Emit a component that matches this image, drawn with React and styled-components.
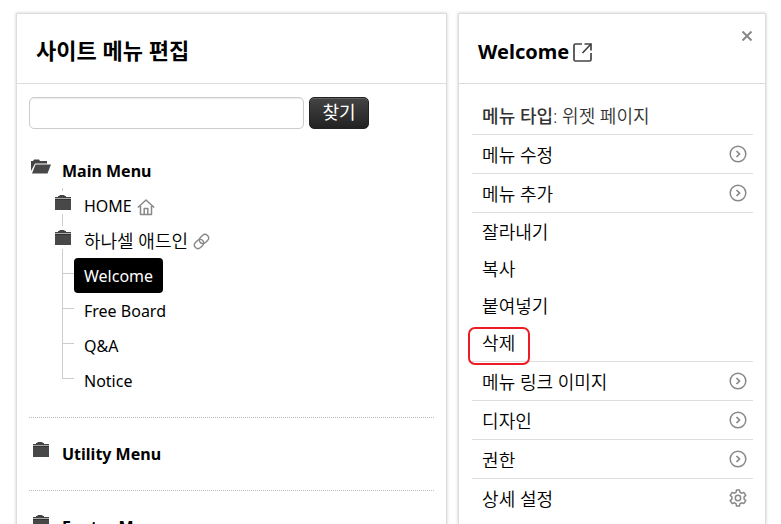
import styled, { createGlobalStyle } from "styled-components"

const GlobalStyle = createGlobalStyle`
    * {
        box-sizing: border-box;
    }

    body {
        margin: 0;
        background-color: #fff;
        color: #000;
        font-family: "Noto Sans", "Noto Sans CJK KR", sans-serif;
        font-size: 16px;
    }

    h2, h3, p, ul {
        margin: 0;
        padding: 0;
    }

    ul {
        list-style: none;
    }
`

const Page = styled.main`
    display: grid;
    grid-template-columns: minmax(0, 7fr) minmax(0, 5fr);
    gap: 11px;
    min-height: 100vh;
    padding: 13px 15px 0 16px;
`

const Panel = styled.section`
    border: 1px solid #ddd;
    border-bottom: 0;
    box-shadow: 0 0 3px #ccc;
    background-color: #fff;
`

const PanelHeader = styled.header`
    display: flex;
    align-items: flex-start;
    justify-content: space-between;
    border-bottom: 1px solid #ddd;
`

const Title = styled.h2`
    display: flex;
    align-items: center;
    gap: 3px;
    padding: ${({ $korean }) => ($korean ? "22px 19px 19px" : "24px 19px 17px")};
    font-size: ${({ $korean }) => ($korean ? "22px" : "20px")};
    line-height: 28px;
    white-space: nowrap;
`

const CloseButton = styled.button`
    display: flex;
    align-items: center;
    justify-content: center;
    width: 20px;
    height: 20px;
    margin: 12px 8px 0 0;
    padding: 0;
    border: 0;
    background: none;
    color: #888;
    cursor: pointer;
`

const TreeBody = styled.div`
    padding: 13px 12px 0;
`

const SearchForm = styled.form`
    display: flex;
    gap: 5px;
    padding-bottom: 6px;
`

const SearchInput = styled.input`
    flex: 0 1 275px;
    min-width: 0;
    height: 32px;
    padding: 0 8px;
    border: 1px solid #ccc;
    border-radius: 5px;
    box-shadow: inset 0 1px 1px rgba(0, 0, 0, 0.08);
    font: inherit;
`

const SearchButton = styled.button`
    width: 60px;
    height: 32px;
    padding: 0 0 2px;
    border: 1px solid #222;
    border-radius: 5px;
    background: linear-gradient(#444, #222);
    box-shadow: inset 0 1px 0 rgba(255, 255, 255, 0.15);
    color: #fff;
    font-family: inherit;
    font-size: 18px;
    line-height: 28px;
    cursor: pointer;
`

const MenuGroup = styled.section`
    padding: 18px 0 19px;
    border-bottom: 1px dotted #bbb;
`

const GroupTitle = styled.h3`
    display: grid;
    grid-template-columns: 20px 1fr;
    gap: 11px;
    height: 35px;
    padding-left: 2px;
    font-size: 16px;
    line-height: 36px;

    svg {
        margin-top: 6px;
        justify-self: center;
    }
`

const TreeRow = styled.li`
    display: flex;
    height: 35px;
    padding-left: 26px;
`

const FolderGutter = styled.span`
    display: flex;
    flex-direction: column;
    width: 19px;

    &::before,
    &::after {
        content: "";
        width: 1px;
        margin-left: 7px;
        background-color: #ccc;
    }

    &::before {
        height: 3px;
    }

    &::after {
        flex: 1;
    }

    svg {
        margin: 4px 0;
    }
`

const Branch = styled.span`
    width: 19px;
    padding-left: 7px;
    display: flex;
    flex-direction: column;

    &::before {
        content: "";
        height: 15px;
        border: solid #ccc;
        border-width: 0 0 1px 1px;
    }

    &::after {
        content: "";
        flex: 1;
        border-left: 1px solid ${({ $last }) => ($last ? "transparent" : "#ccc")};
    }
`

const TreeLink = styled.a`
    display: flex;
    align-items: center;
    gap: 5px;
    padding: 2px 10px 0;
    border-radius: 4px;
    background-color: ${({ $active }) => ($active ? "#000" : "transparent")};
    color: ${({ $active }) => ($active ? "#fff" : "#000")};
    font-size: ${({ $korean }) => ($korean ? "18px" : "16px")};
    font-weight: ${({ $korean }) => ($korean ? 350 : 400)};
    line-height: 33px;
    text-decoration: none;
    white-space: nowrap;

    svg {
        color: #888;
    }
`

const OptionBody = styled.div`
    padding: 13px 12px 0 13px;
`

const MenuType = styled.p`
    height: 37px;
    padding-left: 10px;
    color: #333;
    font-size: 18px;
    font-weight: 350;
    line-height: 38px;
    white-space: nowrap;

    b {
        font-weight: 500;
    }
`

const OptionItem = styled.li`
    position: relative;
    border-top: ${({ $line }) => ($line ? "1px solid #ddd" : "0")};
`

const OptionLink = styled.a`
    display: flex;
    align-items: center;
    justify-content: space-between;
    height: ${({ $tall }) => ($tall ? "38px" : "37px")};
    padding: 0 6px 1px 10px;
    color: #000;
    font-size: 18px;
    font-weight: 350;
    text-decoration: none;
    white-space: nowrap;

    svg {
        color: #888;
    }
`

const Highlight = styled.span`
    position: absolute;
    top: 3px;
    left: -4px;
    width: 62px;
    height: 38px;
    border: 2px solid #ed1c24;
    border-radius: 7px;
    pointer-events: none;
    z-index: 1;
`

function FolderIcon() {
    return (
        <svg width="16" height="15" viewBox="0 0 16 15" aria-hidden="true">
            <path d="M3 1h1l1-1h4l1 1h1v1H3z" fill="#444" />
            <path d="M0 2h16v1H0z" fill="#444" />
            <path d="M0 3h16v1H0z" fill="#aaa" />
            <path d="M0 4h16v1H0z" fill="#333" />
            <path d="M0 5h16v10H0z" fill="#484848" />
        </svg>
    )
}

function OpenFolderIcon() {
    return (
        <svg width="20" height="15" viewBox="0 0 20 15" aria-hidden="true">
            <path d="M0 2h2l1-1.500h5L9 2h7v2.500H4L0 12z" fill="#444" />
            <path d="M4.500 5.500H20l-3.500 9H1z" fill="#484848" />
        </svg>
    )
}

function HomeIcon() {
    return (
        <svg width="18" height="18" viewBox="0 0 18 18" fill="none" stroke="currentColor" strokeWidth="1.500" strokeLinejoin="round" aria-hidden="true">
            <path d="M.8 9.500 9 2l8.200 7.500M3.500 8v8.500h11V8M7.200 16v-5.500h3.600V16" />
        </svg>
    )
}

function LinkIcon() {
    return (
        <svg width="17" height="17" viewBox="0 0 24 24" fill="none" stroke="currentColor" strokeWidth="2" strokeLinecap="round" aria-hidden="true">
            <path d="M10 13a5 5 0 0 0 7.540.540l3-3a5 5 0 0 0-7.070-7.070l-3 3a5 5 0 0 0-.8 5.800" />
            <path d="M14 11a5 5 0 0 0-7.540-.540l-3 3a5 5 0 0 0 7.070 7.070l3-3a5 5 0 0 0 .8-5.800" />
        </svg>
    )
}

function ExternalIcon() {
    return (
        <svg width="20" height="20" viewBox="0 0 20 20" fill="none" stroke="#444" strokeWidth="1.700" aria-hidden="true">
            <path d="M10 2H3.500Q2 2 2 3.500v14Q2 19 3.500 19h14q1.500 0 1.500-1.500V11M12.500 2H19v6.500M19 2l-8.500 9" />
        </svg>
    )
}

function ChevronCircleIcon() {
    return (
        <svg width="18" height="18" viewBox="0 0 18 18" fill="none" stroke="currentColor" strokeWidth="1.500" aria-hidden="true">
            <circle cx="9" cy="9" r="7.800" />
            <path d="m7.500 6 3 3-3 3" strokeWidth="1.700" />
        </svg>
    )
}

function GearIcon() {
    return (
        <svg width="18" height="18" viewBox="0 0 18 18" fill="none" stroke="currentColor" strokeWidth="1.500" strokeLinejoin="round" aria-hidden="true">
            <circle cx="9" cy="9" r="2.700" />
            <path d="M7.500 1h3l.5 2.300 1.500.9 2.300-.8 2 3-1.700 1.500v2.200l1.700 1.500-2 3-2.300-.8-1.500.9-.5 2.300h-3L7 14.700l-1.500-.9-2.300.8-2-3 1.700-1.500V7.900L1.200 6.400l2-3 2.300.8L7 3.300z" />
        </svg>
    )
}

const options = [
    { name: "메뉴 수정", icon: "arrow", line: true },
    { name: "메뉴 추가", icon: "arrow", line: true },
    { name: "잘라내기", line: true },
    { name: "복사" },
    { name: "붙여넣기" },
    { name: "삭제", highlight: true },
    { name: "메뉴 링크 이미지", icon: "arrow", line: true },
    { name: "디자인", icon: "arrow", line: true },
    { name: "권한", icon: "arrow", line: true },
    { name: "상세 설정", icon: "gear", line: true },
]

const pages = ["Welcome", "Free Board", "Q&A", "Notice"]

function MenuTree() {
    return (
        <Panel>
            <PanelHeader>
                <Title $korean>사이트 메뉴 편집</Title>
            </PanelHeader>
            <TreeBody>
                <SearchForm onSubmit={(e) => e.preventDefault()}>
                    <SearchInput type="text" aria-label="메뉴 찾기" />
                    <SearchButton type="submit">찾기</SearchButton>
                </SearchForm>
                <MenuGroup>
                    <GroupTitle><OpenFolderIcon />Main Menu</GroupTitle>
                    <ul>
                        <TreeRow>
                            <FolderGutter><FolderIcon /></FolderGutter>
                            <TreeLink href="#home">HOME <HomeIcon /></TreeLink>
                        </TreeRow>
                        <TreeRow>
                            <FolderGutter><FolderIcon /></FolderGutter>
                            <TreeLink href="#addin" $korean>하나셀 애드인 <LinkIcon /></TreeLink>
                        </TreeRow>
                        {pages.map((page, i) => (
                            <TreeRow key={page}>
                                <Branch $last={i === pages.length - 1} />
                                <TreeLink href="#page" $active={i === 0}>{page}</TreeLink>
                            </TreeRow>
                        ))}
                    </ul>
                </MenuGroup>
                <MenuGroup>
                    <GroupTitle><FolderIcon />Utility Menu</GroupTitle>
                </MenuGroup>
                <MenuGroup>
                    <GroupTitle><FolderIcon />Footer Menu</GroupTitle>
                </MenuGroup>
            </TreeBody>
        </Panel>
    )
}

function MenuOptions() {
    return (
        <Panel>
            <PanelHeader>
                <Title>Welcome <ExternalIcon /></Title>
                <CloseButton type="button" aria-label="닫기">
                    <svg width="10" height="10" viewBox="0 0 10 10" stroke="currentColor" strokeWidth="2">
                        <path d="m.5.5 9 9M9.500.5l-9 9" />
                    </svg>
                </CloseButton>
            </PanelHeader>
            <OptionBody>
                <MenuType><b>메뉴 타입</b>: 위젯 페이지</MenuType>
                <ul>
                    {options.map(({ name, icon, line, highlight }) => (
                        <OptionItem key={name} $line={line}>
                            <OptionLink href="#option" $tall={Boolean(icon)}>
                                {name}
                                {icon === "arrow" && <ChevronCircleIcon />}
                                {icon === "gear" && <GearIcon />}
                            </OptionLink>
                            {highlight && <Highlight />}
                        </OptionItem>
                    ))}
                </ul>
            </OptionBody>
        </Panel>
    )
}

function App() {
    return (
        <>
            <GlobalStyle />
            <Page>
                <MenuTree />
                <MenuOptions />
            </Page>
        </>
    )
}

export default App
